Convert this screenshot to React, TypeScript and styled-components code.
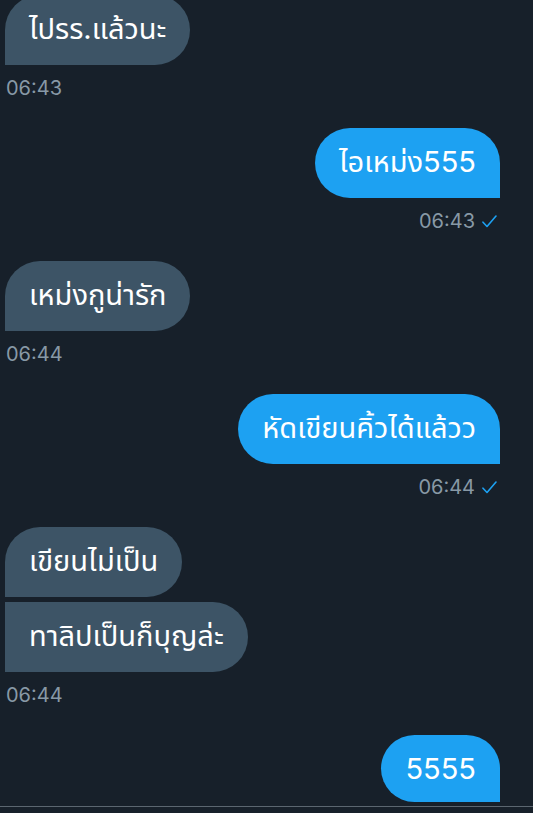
import React from "react";
import styled, { createGlobalStyle } from "styled-components";

const GlobalStyle = createGlobalStyle`
  html, body {
    margin: 0;
    padding: 0;
    background: #17202a;
    overflow: hidden;
  }
`;

const Screen = styled.div`
  width: 533px;
  height: 813px;
  background: #17202a;
  overflow: hidden;
  display: flex;
  flex-direction: column;
  font-family: Inter, "Noto Sans", "Noto Sans Thai", sans-serif;
`;

const Thread = styled.div`
  flex: 1;
  overflow: hidden;
  display: flex;
  flex-direction: column;
  padding: 0 33px 0 5px;
  margin-top: -5px;
`;

const Group = styled.div<{ mine?: boolean }>`
  display: flex;
  flex-direction: column;
  align-items: ${(p) => (p.mine ? "flex-end" : "flex-start")};
  gap: 5px;
  margin-bottom: 29px;
`;

const Bubble = styled.div<{ mine?: boolean; first?: boolean; last?: boolean }>`
  height: 70px;
  box-sizing: border-box;
  display: flex;
  align-items: center;
  padding: 0 24px;
  font-size: 29px;
  color: #ffffff;
  background: ${(p) => (p.mine ? "#1da1f2" : "#3d5466")};
  border-radius: ${(p) =>
    p.mine
      ? `35px 35px ${p.last ? "0" : "35px"} 35px`
      : `${p.first ? "35px" : "0"} 35px 35px 0`};
  white-space: nowrap;
`;

const Meta = styled.div`
  display: flex;
  align-items: center;
  gap: 7px;
  margin-top: 7px;
  height: 22px;
  font-size: 20px;
  color: #8899a6;
  padding: 0 3px 0 1px;
`;

const Divider = styled.div`
  height: 1px;
  background: #5b6670;
  margin-bottom: 6px;
`;

function Check() {
  return (
    <svg width="15" height="13" viewBox="0 0 15 13" fill="none">
      <path d="M1 7.2 L5 11.5 L14 1" stroke="#1da1f2" strokeWidth="1.6" strokeLinecap="round" strokeLinejoin="round" />
    </svg>
  );
}

type Message = {
  id: string;
  mine: boolean;
  lines: string[];
  time: string;
};

const messages: Message[] = [
  { id: "a", mine: false, lines: ["ไปรร.แล้วนะ"], time: "06:43" },
  { id: "b", mine: true, lines: ["ไอเหม่ง555"], time: "06:43" },
  { id: "c", mine: false, lines: ["เหม่งกูน่ารัก"], time: "06:44" },
  { id: "d", mine: true, lines: ["หัดเขียนคิ้วได้แล้วว"], time: "06:44" },
  { id: "e", mine: false, lines: ["เขียนไม่เป็น", "ทาลิปเป็นก็บุญล่ะ"], time: "06:44" },
];

export default function App() {
  return (
    <>
      <GlobalStyle />
      <Screen>
        <Thread>
          {messages.map((m) => (
            <Group key={m.id} mine={m.mine}>
              {m.lines.map((line, i) => (
                <Bubble
                  key={i}
                  mine={m.mine}
                  first={i === 0}
                  last={i === m.lines.length - 1}
                >
                  {line}
                </Bubble>
              ))}
              <Meta>
                {m.time}
                {m.mine && <Check />}
              </Meta>
            </Group>
          ))}
          <Group mine>
            <Bubble mine first last style={{ height: 67 }}>
              5555
            </Bubble>
          </Group>
        </Thread>
        <Divider />
      </Screen>
    </>
  );
}
